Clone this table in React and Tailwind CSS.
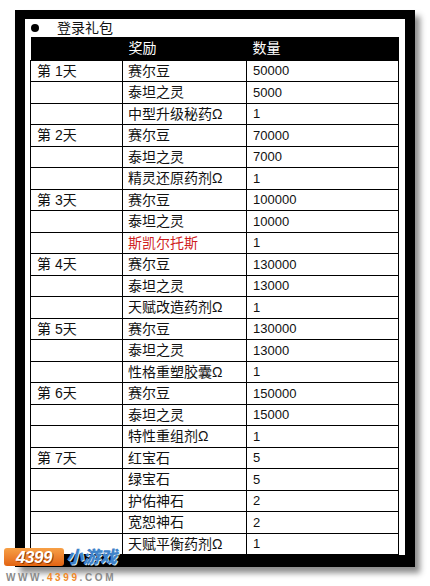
import React from 'react'

const rows = [
    ['第 1天', '赛尔豆', '50000'],
    ['', '泰坦之灵', '5000'],
    ['', '中型升级秘药Ω', '1'],
    ['第 2天', '赛尔豆', '70000'],
    ['', '泰坦之灵', '7000'],
    ['', '精灵还原药剂Ω', '1'],
    ['第 3天', '赛尔豆', '100000'],
    ['', '泰坦之灵', '10000'],
    ['', '斯凯尔托斯', '1', true],
    ['第 4天', '赛尔豆', '130000'],
    ['', '泰坦之灵', '13000'],
    ['', '天赋改造药剂Ω', '1'],
    ['第 5天', '赛尔豆', '130000'],
    ['', '泰坦之灵', '13000'],
    ['', '性格重塑胶囊Ω', '1'],
    ['第 6天', '赛尔豆', '150000'],
    ['', '泰坦之灵', '15000'],
    ['', '特性重组剂Ω', '1'],
    ['第 7天', '红宝石', '5'],
    ['', '绿宝石', '5'],
    ['', '护佑神石', '2'],
    ['', '宽恕神石', '2'],
    ['', '天赋平衡药剂Ω', '1'],
]

const font = { fontFamily: '"Liberation Sans", "Noto Sans CJK SC", sans-serif' }

const App = () => {
    return (
        <div className='relative w-[430px] h-[586px] bg-white overflow-hidden text-[#111]' style={font}>
            <div className='ml-[15px] mt-[10px] w-[400px] border-l-[10px] border-t-[9px] border-r-[10px] border-b-[12px] border-black bg-white shadow-[5px_6px_6px_rgba(0,0,0,0.45)]'>
                {/* title */}
                <div className='h-[18px] flex items-center pl-[6px]'>
                    <span className='w-[8px] h-[8px] rounded-full bg-black'></span>
                    <span className='ml-[18px] text-[14px] leading-none'>登录礼包</span>
                </div>
                <table className='ml-[5px] w-[368px] border-collapse table-fixed'>
                    <colgroup>
                        <col className='w-[92px]' />
                        <col className='w-[124px]' />
                        <col className='w-[152px]' />
                    </colgroup>
                    <thead>
                        <tr className='bg-black text-white h-[23px]'>
                            <th className='p-0'></th>
                            <th className='text-left font-normal text-[14px] px-[6px] py-0 leading-none'>奖励</th>
                            <th className='text-left font-normal text-[14px] px-[6px] py-0 leading-none'>数量</th>
                        </tr>
                    </thead>
                    <tbody>
                        {rows.map(([day, item, num, red], i) => (
                            <tr key={i} className='h-[21.5px]'>
                                <td className='border border-black px-[6px] py-0 text-[14px] leading-none whitespace-nowrap'>{day}</td>
                                <td className={'border border-black px-[5px] py-0 text-[14px] leading-none whitespace-nowrap ' + (red ? 'text-[#d01f1f]' : '')}>{item}</td>
                                <td className='border border-black px-[6px] py-0 text-[13px] leading-none'>{num}</td>
                            </tr>
                        ))}
                    </tbody>
                </table>
            </div>

            {/* logo */}
            <div className='absolute left-[4px] top-[548px]'>
                <div className='flex items-end'>
                    <div className='h-[18px] w-[60px] rounded-[3px] bg-gradient-to-b from-[#f7a046] to-[#e2630f] flex items-center justify-center'>
                        <span className='text-white italic font-black text-[17px] leading-none tracking-tight [text-shadow:1px_1px_0_#9a3a00]'>4399</span>
                    </div>
                    <span className='ml-[2px] text-[#3f83c9] italic font-black text-[17px] leading-none [text-shadow:1px_1px_0_#cfe3f5]'>小游戏</span>
                </div>
                <div className='mt-[7px] ml-[2px] text-[10px] font-bold leading-none tracking-[2.6px] text-[#8a8a8a]'>
                    WWW.<span className='text-[#f08a2a]'>4399</span>.COM
                </div>
            </div>
        </div>
    )
}

export default App
